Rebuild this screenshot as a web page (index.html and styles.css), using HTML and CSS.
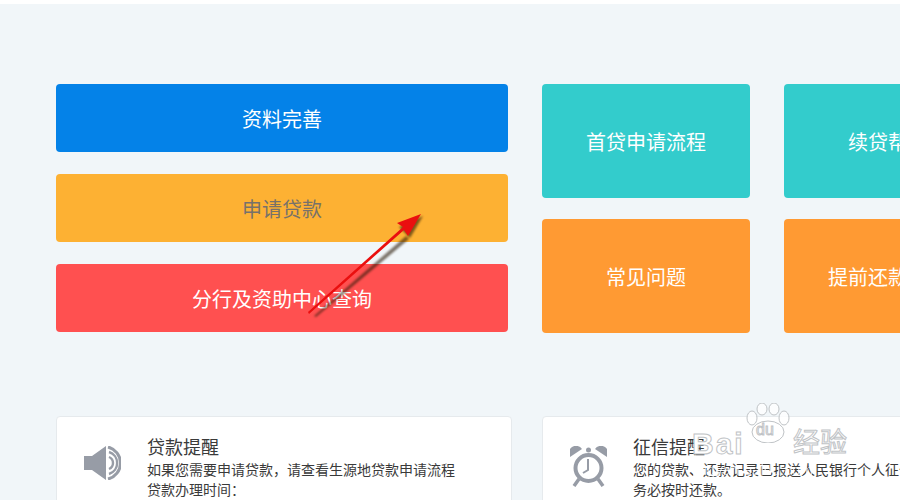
FILE: index.html
```html
<!DOCTYPE html>
<html lang="zh-CN">
<head>
  <meta charset="UTF-8">
  <title>贷款</title>
  <link rel="stylesheet" href="styles.css">
</head>
<body>
  <div class="page">
    <div class="actions">
      <div class="wide-col">
        <a class="btn blue">资料完善</a>
        <a class="btn yellow">申请贷款</a>
        <a class="btn red">分行及资助中心查询</a>
      </div>
      <div class="tiles">
        <a class="tile teal">首贷申请流程</a>
        <a class="tile teal">续贷帮助</a>
        <a class="tile orange">常见问题</a>
        <a class="tile orange">提前还款申请</a>
      </div>
    </div>

    <div class="notices">
      <div class="card">
        <svg class="card-icon" viewBox="0 0 37 34" width="37" height="34">
          <path fill="#979ca6" d="M0 10h8L22 0v34L8 24H0z"/>
          <g fill="none" stroke="#979ca6">
            <path d="M25 11a6.5 6.5 0 0 1 0 12" stroke-width="2.4"/>
            <path d="M25 6a11.5 11.5 0 0 1 0 22" stroke-width="2.4"/>
            <path d="M24 1a16.5 16.5 0 0 1 0 32" stroke-width="3"/>
          </g>
        </svg>
        <div class="card-body">
          <h3>贷款提醒</h3>
          <p>如果您需要申请贷款&#65292;请查看生源地贷款申请流程</p>
          <p>贷款办理时间&#65306;</p>
        </div>
      </div>
      <div class="card">
        <svg class="card-icon" viewBox="0 0 37 41" width="37" height="41">
          <g fill="#979ca6">
            <path d="M0 11a7 7 0 0 1 12-8z"/>
            <path d="M37 11a7 7 0 0 0-12-8z"/>
            <circle cx="18.5" cy="4" r="2.5"/>
          </g>
          <g fill="none" stroke="#979ca6">
            <circle cx="18.5" cy="22" r="13" stroke-width="4"/>
            <path d="M18 13v11l-5 3" stroke-width="2"/>
            <path d="M9 33l-5 7M28 33l5 7" stroke-width="3.5"/>
          </g>
        </svg>
        <div class="card-body">
          <h3>征信提醒</h3>
          <p class="long">您的贷款、还款记录已报送人民银行个人征信系统&#65292;请您务必按时还款。</p>
        </div>
      </div>
    </div>
  </div>

  <svg class="arrow" viewBox="0 0 900 500" width="900" height="500">
    <g class="arrow-shadow" fill="#2a1a08">
      <path d="M314 316l92-80 3 3-93 78z"/>
      <path d="M423 216l-13 22-7-7-4-4z"/>
    </g>
    <path fill="#ea0f0f" d="M308 312l95-85-6-4 24-9-13 22-4-6-95 84z"/>
  </svg>

  <div class="watermark">
    <span class="wm-bai">Bai</span>
    <span class="wm-paw">
      <svg viewBox="0 0 50 40" width="50" height="40">
        <g fill="#fff" fill-opacity=".8" stroke="#bfc3c6">
          <ellipse cx="9" cy="15" rx="5" ry="7"/>
          <ellipse cx="19" cy="6" rx="5" ry="6"/>
          <ellipse cx="31" cy="6" rx="5" ry="6"/>
          <ellipse cx="41" cy="15" rx="5" ry="7"/>
          <ellipse cx="25" cy="29" rx="16" ry="11"/>
        </g>
      </svg>
      <span class="wm-du">du</span>
    </span>
    <span class="wm-cn">经验</span>
    <span class="wm-url">jingyan.baidu.com</span>
  </div>
</body>
</html>
```

FILE: styles.css
```css
html, body {
  margin: 0;
  height: 100%;
  overflow: hidden;
}

body {
  font-family: "Noto Sans CJK SC", "Liberation Sans", sans-serif;
  background: #f1f6f9;
  border-top: 4px solid #fff;
  box-sizing: border-box;
  position: relative;
}

.page {
  width: 1100px;
  padding: 80px 0 0 56px;
  box-sizing: border-box;
}

.actions {
  display: flex;
  gap: 34px;
}

.wide-col {
  width: 452px;
  display: flex;
  flex-direction: column;
  gap: 22px;
}

.btn, .tile {
  display: flex;
  align-items: center;
  justify-content: center;
  color: #fff;
  font-size: 20px;
  border-radius: 4px;
}

.btn {
  height: 68px;
}

.tiles {
  display: grid;
  grid-template-columns: 208px 208px;
  grid-auto-rows: 114px;
  column-gap: 34px;
  row-gap: 21px;
}

.blue { background: #0482e8; }
.yellow { background: #fdb133; color: #77716a; }
.red { background: #ff5050; }
.teal { background: #33cccc; }
.orange { background: #ff9a33; }

.notices {
  display: flex;
  gap: 30px;
  margin-top: 83px;
}

.card {
  width: 456px;
  height: 160px;
  flex: none;
  box-sizing: border-box;
  background: #fff;
  border: 1px solid #e6eaed;
  border-radius: 4px;
  padding: 17px 0 0 27px;
  display: flex;
}

.card-icon {
  flex: none;
  margin-top: 12px;
}

.card-body {
  margin-left: 26px;
  color: #3a3a3a;
}

.card-body h3 {
  margin: 0 0 1px;
  font-size: 18px;
  font-weight: normal;
  line-height: 24px;
}

.card-body p {
  margin: 0;
  font-size: 14px;
  line-height: 20px;
}

.card-body p.long {
  width: 354px;
}

.arrow {
  position: absolute;
  left: 0;
  top: -4px;
  pointer-events: none;
}

.arrow-shadow {
  opacity: .6;
  filter: blur(1.2px);
}

.watermark {
  position: absolute;
  left: 692px;
  top: 399px;
  width: 160px;
  height: 80px;
  color: #fff;
  -webkit-text-stroke: 1px #bfc3c6;
}

.wm-bai {
  position: absolute;
  left: 0;
  top: 24px;
  font: bold 30px "Liberation Sans", sans-serif;
  letter-spacing: 2px;
}

.wm-paw {
  position: absolute;
  left: 51px;
  top: 0;
}

.wm-du {
  position: absolute;
  left: 13px;
  top: 18px;
  font: 16px "Liberation Sans", sans-serif;
}

.wm-cn {
  position: absolute;
  left: 101px;
  top: 20px;
  font-size: 27px;
  line-height: 36px;
}

.wm-url {
  position: absolute;
  left: 0;
  top: 58px;
  font: 15px "Liberation Sans", sans-serif;
  opacity: .7;
  -webkit-text-stroke: 0;
}
```
